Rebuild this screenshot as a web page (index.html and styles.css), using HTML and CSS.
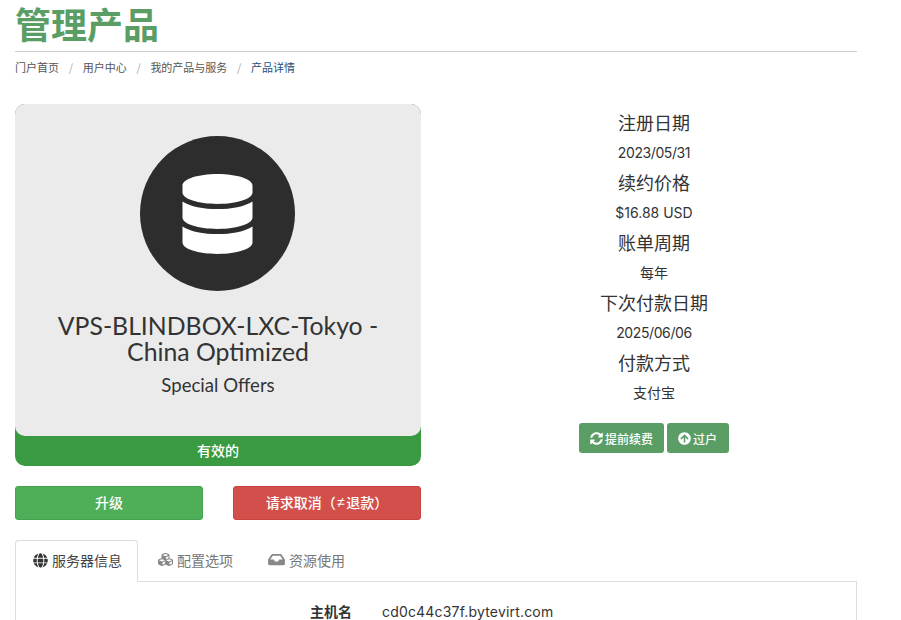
FILE: index.html
```html
<!DOCTYPE html>
<html lang="zh">
<head>
<meta charset="utf-8">
<title>管理产品</title>
<link rel="stylesheet" href="styles.css">
</head>
<body>
<div class="page">
  <header class="head">
    <h1 class="title">管理产品</h1>
  </header>
  <nav class="crumbs">
    <a class="crumb">门户首页</a><span class="sep">/</span>
    <a class="crumb">用户中心</a><span class="sep">/</span>
    <a class="crumb">我的产品与服务</a><span class="sep">/</span>
    <a class="crumb current">产品详情</a>
  </nav>
  <div class="row">
    <section class="col">
      <div class="product-card">
        <div class="product-main">
          <div class="circle">
            <svg class="db" viewBox="0 0 448 512"><path d="M448 73.143v45.714C448 159.143 347.667 192 224 192S0 159.143 0 118.857V73.143C0 32.857 100.333 0 224 0s224 32.857 224 73.143zM448 176v102.857C448 319.143 347.667 352 224 352S0 319.143 0 278.857V176c48.125 33.143 136.208 48.572 224 48.572S399.874 209.143 448 176zm0 160v102.857C448 479.143 347.667 512 224 512S0 479.143 0 438.857V336c48.125 33.143 136.208 48.572 224 48.572S399.874 369.143 448 336z"/></svg>
          </div>
          <h3 class="pname">VPS-BLINDBOX-LXC-Tokyo - China Optimized</h3>
          <h4 class="pgroup">Special Offers</h4>
        </div>
        <div class="status">有效的</div>
      </div>
      <div class="actions">
        <a class="btn-wide green">升级</a>
        <a class="btn-wide red">请求取消（<span class="ne">≠</span>退款）</a>
      </div>
    </section>
    <section class="col info">
      <h4 class="label">注册日期</h4><p class="value date">2023/05/31</p>
      <h4 class="label">续约价格</h4><p class="value">$16.88 USD</p>
      <h4 class="label">账单周期</h4><p class="value">每年</p>
      <h4 class="label">下次付款日期</h4><p class="value date">2025/06/06</p>
      <h4 class="label">付款方式</h4><p class="value">支付宝</p>
      <div class="mini-actions">
        <a class="btn-mini"><svg class="ic" viewBox="0 0 512 512"><path d="M370.72 133.28C339.458 104.008 298.888 87.962 255.848 88c-77.458.068-144.328 53.178-162.791 126.85-1.344 5.363-6.122 9.15-11.651 9.15H24.103c-7.498 0-13.194-6.807-11.807-14.176C33.933 94.924 134.813 8 256 8c66.448 0 126.791 26.136 171.315 68.685L463.03 40.97C478.149 25.851 504 36.559 504 57.941V192c0 13.255-10.745 24-24 24H345.941c-21.382 0-32.09-25.851-16.971-40.971l41.75-41.749zM32 296h134.059c21.382 0 32.09 25.851 16.971 40.971l-41.75 41.75c31.262 29.273 71.835 45.319 114.876 45.28 77.418-.07 144.315-53.144 162.787-126.849 1.344-5.363 6.122-9.15 11.651-9.15h57.304c7.498 0 13.194 6.807 11.807 14.176C478.067 417.076 377.187 504 256 504c-66.448 0-126.791-26.136-171.315-68.685L48.97 471.03C33.851 486.149 8 475.441 8 454.059V320c0-13.255 10.745-24 24-24z"/></svg>提前续费</a>
        <a class="btn-mini"><svg class="ic" viewBox="0 0 512 512"><path d="M8 256C8 119 119 8 256 8s248 111 248 248-111 248-248 248S8 393 8 256zm143.6 28.9l72.4-75.5V392c0 13.3 10.7 24 24 24h16c13.3 0 24-10.7 24-24V209.4l72.4 75.5c9.3 9.7 24.8 9.9 34.3.4l10.9-11c9.4-9.4 9.4-24.6 0-33.9L273 107.7c-9.4-9.4-24.6-9.4-33.9 0L106.3 240.8c-9.4 9.4-9.4 24.6 0 33.9l10.9 11c9.6 9.5 25.1 9.3 34.4-.4z"/></svg>过户</a>
      </div>
    </section>
  </div>
  <div class="tabs">
    <a class="tab active"><svg class="tic" viewBox="0 0 496 512"><path d="M336.5 160C322 70.7 287.8 8 248 8s-74 62.7-88.5 152h177zM152 256c0 22.2 1.2 43.5 3.3 64h185.3c2.100-20.500 3.300-41.800 3.300-64s-1.200-43.500-3.300-64H155.300c-2.100 20.500-3.300 41.800-3.300 64zm324.700-96c-28.600-67.900-86.500-120.400-158-141.600 24.400 33.800 41.200 84.700 50 141.600h108zM177.200 18.400C105.800 39.600 47.800 92.100 19.300 160h108c8.700-56.900 25.500-107.800 49.900-141.600zM487.400 192H372.700c2.100 21 3.300 42.500 3.300 64s-1.200 43-3.300 64h114.600c5.500-20.500 8.600-41.800 8.600-64s-3.100-43.500-8.500-64zM120 256c0-21.500 1.200-43 3.300-64H8.600C3.200 212.500 0 233.800 0 256s3.200 43.500 8.600 64h114.600c-2-21-3.200-42.500-3.200-64zm39.500 96c14.500 89.300 48.700 152 88.500 152s74-62.700 88.500-152h-177zm159.300 141.600c71.400-21.200 129.400-73.700 158-141.600h-108c-8.800 56.900-25.600 107.800-50 141.600zM19.300 352c28.600 67.900 86.500 120.400 158 141.600-24.400-33.800-41.200-84.700-50-141.600h-108z"/></svg>服务器信息</a>
    <a class="tab"><svg class="tic" viewBox="0 0 512 512"><path d="M488.6 250.2L392 214V105.500c0-15-9.300-28.400-23.400-33.700l-100-37.500c-8.100-3.100-17.100-3.100-25.300 0l-100 37.500c-14.100 5.300-23.400 18.700-23.400 33.700V214l-96.600 36.200C9.300 255.500 0 268.900 0 283.900V394c0 13.600 7.700 26.100 19.900 32.200l100 50c10.100 5.100 22.100 5.100 32.200 0l103.900-52 103.900 52c10.100 5.100 22.100 5.100 32.200 0l100-50c12.200-6.100 19.900-18.600 19.900-32.200V283.900c0-15-9.300-28.400-23.400-33.700zM358 214.800l-85 31.900v-68.200l85-37v73.300zM154 104.100l102-38.200 102 38.200v.6l-102 41.400-102-41.400v-.6zm84 291.100l-85 42.500v-79.100l85-38.800v75.400zm0-112l-102 41.400-102-41.400v-.6l102-38.200 102 38.200v.6zm240 112l-85 42.500v-79.100l85-38.800v75.400zm0-112l-102 41.400-102-41.400v-.6l102-38.200 102 38.200v.6z"/></svg>配置选项</a>
    <a class="tab"><svg class="tic wide" viewBox="0 0 576 512"><path d="M567.938 243.908L462.25 85.374A48.003 48.003 0 0 0 422.311 64H153.689a48 48 0 0 0-39.938 21.374L8.062 243.908A47.994 47.994 0 0 0 0 270.533V400c0 26.51 21.49 48 48 48h480c26.51 0 48-21.49 48-48V270.533a47.994 47.994 0 0 0-8.062-26.625zM162.252 128h251.497l85.333 128H376l-32 64H232l-32-64H77.918l84.334-128z"/></svg>资源使用</a>
  </div>
  <div class="tab-pane">
    <div class="detail"><span class="dt">主机名</span><span class="dd">cd0c44c37f.bytevirt.com</span></div>
  </div>
</div>
</body>
</html>
```
FILE: styles.css
```css
html, body { margin: 0; padding: 0; height: 620px; overflow: hidden; background: #fff; }
body { font-family: "Inter", "Noto Sans CJK SC", sans-serif; color: #333; font-size: 14px; }
a { text-decoration: none; }
.page { width: 842px; padding: 0 44px 0 15px; }
.head { height: 51px; border-bottom: 1px solid #ccc; box-sizing: content-box; }
.title { margin: 0; font-family: "Noto Sans CJK SC", sans-serif; font-size: 36px; line-height: 47px; font-weight: 700; color: #5a9e65; }
.crumbs { display: flex; align-items: center; height: 30px; font-family: "Noto Sans CJK SC", sans-serif; font-size: 11px; color: #555; }
.crumb { color: #555; }
.crumb.current { color: #1c4f7d; }
.sep { color: #aaa; margin: 0 9.700px; }
.row { display: flex; gap: 30px; margin-top: 22px; }
.col { width: 406px; }
.product-card { background: #3a9a41; border-radius: 10px; height: 362px; display: flex; flex-direction: column; }
.product-main { background: #ebebeb; border-radius: 10px; height: 332px; display: flex; flex-direction: column; align-items: center; text-align: center; padding-top: 32px; box-sizing: border-box; }
.circle { width: 155px; height: 155px; margin-right: 1px; border-radius: 50%; background: #2d2d2d; display: flex; align-items: center; justify-content: center; }
.db { width: 71px; height: 80px; fill: #fff; }
.pname { margin: 22px 0 0; font-family: "Lato", "Noto Sans CJK SC", sans-serif; font-weight: 400; font-size: 24.800px; line-height: 26.400px; color: #333; width: 340px; }
.pgroup { margin: 9px 0 0; font-family: "Lato", sans-serif; font-weight: 400; font-size: 18.600px; line-height: 20px; color: #333; }
.status { flex: 1; display: flex; align-items: center; justify-content: center; padding-bottom: 2px; color: #fff; font-family: "Noto Sans CJK SC", sans-serif; font-weight: 500; font-size: 14px; }
.actions { display: flex; justify-content: space-between; margin-top: 20px; }
.btn-wide { width: 188px; height: 34px; display: flex; align-items: center; justify-content: center; padding-bottom: 2px; box-sizing: border-box; border-radius: 3px; color: #fff; font-family: "Noto Sans CJK SC", sans-serif; font-weight: 500; font-size: 14px; }
.ne { font-family: "Liberation Sans", sans-serif; margin: 0 1.500px; }
.green { background: #4fae58; border: 1px solid #44a34d; }
.red { background: #d34f4b; border: 1px solid #c9443f; }
.info { text-align: center; padding-top: 5px; }
.label { margin: 0; font-family: "Noto Sans CJK SC", sans-serif; font-weight: 400; font-size: 18px; line-height: 26px; color: #333; }
.value { margin: 0; font-family: "Inter", "Noto Sans CJK SC", sans-serif; font-size: 14px; line-height: 36px; height: 34px; color: #333; }
.date { letter-spacing: -.400px; }
.mini-actions { display: flex; justify-content: center; gap: 3px; margin-top: 14px; }
.btn-mini { display: flex; align-items: center; justify-content: center; height: 30px; padding: 0 11px; background: #5a9e65; border-radius: 3px; color: #fff; font-family: "Noto Sans CJK SC", sans-serif; font-weight: 500; font-size: 12px; }
.btn-mini + .btn-mini { padding-right: 12px; }
.ic { width: 13px; height: 13px; fill: #fff; margin-right: 2px; }
.tabs { display: flex; margin-top: 20px; height: 41px; border-bottom: 1px solid #ddd; box-sizing: content-box; }
.tab { display: flex; align-items: center; height: 41px; padding: 0 14px 3px 19px; font-family: "Noto Sans CJK SC", sans-serif; font-size: 14px; color: #777; box-sizing: border-box; border: 1px solid transparent; border-bottom: 0; }
.tab.active { color: #444; background: #fff; border-color: #ddd; border-radius: 4px 4px 0 0; height: 42px; padding: 0 15px 3px 17px; }
.tic { width: 15px; height: 15px; margin-right: 4px; fill: #888; }
.tic.wide { width: 17px; }
.tab.active .tic { fill: #333; }
.tab-pane { border: 1px solid #ddd; border-top: 0; height: 60px; padding-top: 20px; box-sizing: border-box; }
.detail { display: flex; font-size: 14px; line-height: 20px; }
.dt { width: 336px; height: 18px; line-height: 18px; text-align: right; font-family: "Noto Sans CJK SC", sans-serif; font-weight: 700; color: #333; }
.dd { margin-left: 30px; letter-spacing: .180px; color: #333; }
```
